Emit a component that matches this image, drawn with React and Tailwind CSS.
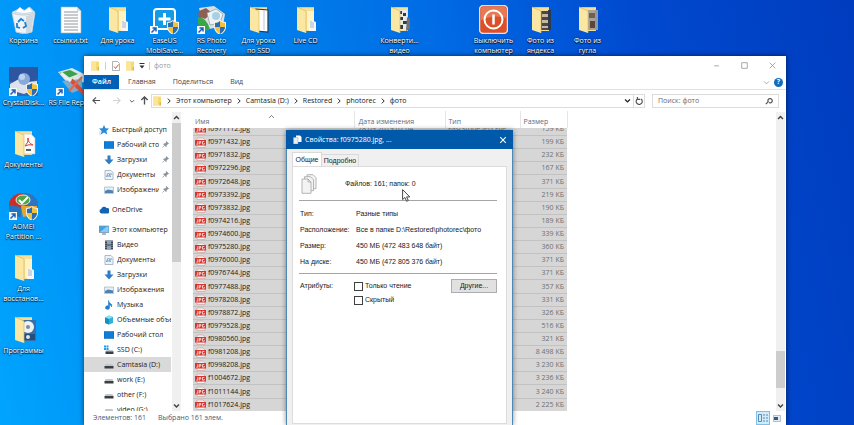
import { useState } from "react";

const DESKTOP = [
  { col: 1, row: 1, icon: "bin", label: ["Корзина"] },
  { col: 2, row: 1, icon: "text", label: ["ссылки.txt"] },
  { col: 3, row: 1, icon: "folder", label: ["Для урока"] },
  { col: 4, row: 1, icon: "easeus", label: ["EaseUS", "MobiSave..."] },
  { col: 5, row: 1, icon: "rsphoto", label: ["RS Photo", "Recovery"] },
  { col: 6, row: 1, icon: "folderBook", label: ["Для урока", "по SSD"] },
  { col: 7, row: 1, icon: "folder", label: ["Live CD"] },
  { col: 9, row: 1, icon: "folderVideo", label: ["Конверти...", "видео"] },
  { col: 11, row: 1, icon: "power", label: ["Выключить", "компьютер"] },
  { col: 12, row: 1, icon: "folderDark", label: ["Фото из", "яндекса"] },
  { col: 13, row: 1, icon: "folderPhoto", label: ["Фото из", "гугла"] },
  { col: 1, row: 2, icon: "crystal", label: ["CrystalDisk..."] },
  { col: 2, row: 2, icon: "rsfile", label: ["RS File Repair"] },
  { col: 1, row: 3, icon: "folderPdf", label: ["Документы"] },
  { col: 1, row: 4, icon: "aomei", label: ["AOMEI", "Partition ..."] },
  { col: 1, row: 5, icon: "folder", label: ["Для", "восстанов..."] },
  { col: 1, row: 6, icon: "folderDisc", label: ["Программы"] },
];

const QUICK = [
  { icon: "desktop", label: "Рабочий стол" },
  { icon: "download", label: "Загрузки" },
  { icon: "document", label: "Документы" },
  { icon: "image", label: "Изображения" },
];

const PC = [
  { icon: "video", label: "Видео" },
  { icon: "document", label: "Документы" },
  { icon: "download", label: "Загрузки" },
  { icon: "image", label: "Изображения" },
  { icon: "music", label: "Музыка" },
  { icon: "cube", label: "Объемные объекты" },
  { icon: "desktop", label: "Рабочий стол" },
  { icon: "ssd", label: "SSD (C:)" },
  { icon: "drive", label: "Camtasia (D:)", active: true },
  { icon: "drive", label: "work (E:)" },
  { icon: "drive", label: "other (F:)" },
  { icon: "drive", label: "video (G:)" },
];

const FILES = [
  ["f0971112.jpg", "159 КБ", "28.09.2019 02:04", "FastStone JPG File"],
  ["f0971432.jpg", "199 КБ"],
  ["f0971832.jpg", "232 КБ"],
  ["f0972296.jpg", "167 КБ"],
  ["f0972648.jpg", "371 КБ"],
  ["f0973392.jpg", "219 КБ"],
  ["f0973832.jpg", "190 КБ"],
  ["f0974216.jpg", "189 КБ"],
  ["f0974600.jpg", "339 КБ"],
  ["f0975280.jpg", "360 КБ"],
  ["f0976000.jpg", "371 КБ"],
  ["f0976744.jpg", "371 КБ"],
  ["f0977488.jpg", "357 КБ"],
  ["f0978208.jpg", "331 КБ"],
  ["f0978872.jpg", "326 КБ"],
  ["f0979528.jpg", "516 КБ"],
  ["f0980560.jpg", "321 КБ"],
  ["f0981208.jpg", "8 498 КБ"],
  ["f0998208.jpg", "3 230 КБ"],
  ["f1004672.jpg", "3 236 КБ"],
  ["f1011144.jpg", "3 240 КБ"],
  ["f1017624.jpg", "2 225 КБ"],
];

const PATH = ["Этот компьютер", "Camtasia (D:)", "Restored", "photorec", "фото"];

const Shield = () => (
  <g>
    <path d="M17 17q4 0 6-2q2 2 6 2v5q0 5-6 8q-6-3-6-8z" fill="#f4f1e4" />
    <path d="M18 18q3 0 5-2v6h-5z" fill="#2b6cb8" />
    <path d="M23 16q2 2 5 2v4h-5z" fill="#f3c13a" />
    <path d="M18 22h5v7q-5-3-5-7z" fill="#f3c13a" />
    <path d="M23 22h5q0 4-5 7z" fill="#2b6cb8" />
  </g>
);

const Shortcut = () => (
  <g>
    <path d="M0 21h8v8h-8z" fill="#f5f9fd" />
    <path d="M1.500 27.500l4-4M2.500 23h3.500v3.500" fill="none" stroke="#1f5fb4" strokeWidth="1.500" />
  </g>
);

const FolderBase = ({ children }) => (
  <g>
    <path d="M6 3l3-1h14v24h-14z" fill="#e9c86c" />
    <path d="M9 3h14v23H9z" fill="#f6df95" />
    {children}
    <path d="M6 2l9 4v22l-9-3z" fill="#fbe7a4" />
    <path d="M6 2l9 4v22" fill="none" stroke="#dcba5c" strokeWidth="0.700" />
  </g>
);

const desktopIcons = {
  bin: (
    <g>
      <path d="M3 7l8-4l5 2l5-3l5 5l-3 20q-8 3-16 0z" fill="#dfe7ee" />
      <path d="M3 8q11 4 23 0l-3 19q-8 3-16 0z" fill="#eef3f7" stroke="#b4c3cf" strokeWidth="0.700" />
      <path d="M6 7l5-5l4 4l5-4l4 5q-9 3-18 0z" fill="#fff" stroke="#bac5cf" strokeWidth="0.600" />
      <path d="M17 11l8-2l-3 18l-5 1z" fill="#cdd8e1" />
      <path d="M9 17l3-3l3 2m1 1l1 4l-3 2m-3 0l-3-1v-4" fill="none" stroke="#1f7fd0" strokeWidth="1.800" />
    </g>
  ),
  text: (
    <g>
      <path d="M5 2h16l4 4v22H5z" fill="#fdfdfd" stroke="#aab4bd" strokeWidth="0.600" />
      <path d="M21 2v4h4" fill="#d5dbe0" />
      <path d="M8 7h14M8 10h14M8 13h14M8 16h14M8 19h14M8 22h14M8 25h14" stroke="#8f989f" strokeWidth="1" />
    </g>
  ),
  folder: (
    <FolderBase>
      <path d="M16 6h7v19h-7z" fill="#fff3c4" />
      <path d="M20 15l5 2v9h-7v-9z" fill="#f4f6f8" />
      <path d="M20 16v7M22 17v6" stroke="#8fa5ba" strokeWidth="0.800" />
    </FolderBase>
  ),
  folderBook: (
    <FolderBase>
      <path d="M12 4l12 1v22l-11-1z" fill="#fdfdfd" stroke="#27384d" strokeWidth="1.200" />
      <path d="M20 5v20" stroke="#bfc9d3" strokeWidth="1" />
    </FolderBase>
  ),
  folderVideo: (
    <FolderBase>
      <path d="M13 5h9v20h-9z" fill="#e7eaec" />
      <path d="M14 6h3v3h-3zM18 8h3v3h-3zM14 12h4v3h-4zM18 16h4v3h-4zM14 20h4v4h-4z" fill="#333b42" />
      <path d="M22 12l3 2v10l-4 2z" fill="#6d7478" />
    </FolderBase>
  ),
  folderDark: (
    <FolderBase>
      <path d="M14 6h11v19H14z" fill="#4b4746" />
      <path d="M16 9h6v3h-6zM16 15h6v3h-6zM16 21h6v2h-6z" fill="#c7b6a2" />
      <path d="M22 5h3v20h-3z" fill="#2e3a4b" />
    </FolderBase>
  ),
  folderPhoto: (
    <FolderBase>
      <path d="M15 5h10v20H15z" fill="#a7a39c" />
      <path d="M16 8h6v5h-6z" fill="#735f4e" />
      <path d="M17 16h5v7h-5z" fill="#5c4636" />
      <path d="M22 5h3v20h-3z" fill="#8d99a8" />
    </FolderBase>
  ),
  folderPdf: (
    <FolderBase>
      <path d="M13 5h9l4 4v16H13z" fill="#fbfbfb" stroke="#c2c2c2" strokeWidth="0.600" />
      <path d="M16 17q4-4 3-8q0 5 5 7q-4-1-8 1z" fill="none" stroke="#d4443a" strokeWidth="1" />
      <path d="M17 20h5v2h-5z" fill="#59616a" />
    </FolderBase>
  ),
  folderDisc: (
    <FolderBase>
      <path d="M13 5h14v21H13z" fill="#3a6fa8" />
      <path d="M14 19h12v6H14z" fill="#274f7e" />
      <circle cx="19" cy="12" r="6" fill="#eef2f5" />
      <circle cx="19" cy="12" r="2" fill="#7a8b9a" />
      <circle cx="19" cy="22" r="2" fill="#dfe7ee" />
    </FolderBase>
  ),
  easeus: (
    <g>
      <rect x="4" y="4" width="21" height="20" rx="3" fill="#139ae6" stroke="#fff" strokeWidth="2" />
      <path d="M14.500 8v12M8.500 14h12" stroke="#fff" strokeWidth="3" />
      <Shield />
      <Shortcut />
    </g>
  ),
  rsphoto: (
    <g>
      <path d="M2 3l15-2l11 8l-2 12l-18 4z" fill="#d9e0e2" />
      <path d="M2 6l7-3l6 5l-7 6l-7-3z" fill="#8d5f55" />
      <path d="M1 12q8 0 12 12l-8 3q-5-6-4-15z" fill="#3aa648" />
      <path d="M10 8l9-4l7 5l-3 9l-10 2z" fill="#edf3f4" stroke="#8c9aa0" strokeWidth="0.700" />
      <circle cx="19" cy="11" r="4" fill="#a8d0e5" />
      <Shield />
      <Shortcut />
    </g>
  ),
  rsfile: (
    <g>
      <path d="M2 5l14-4l12 6v8l-14 4z" fill="#dde6e2" />
      <path d="M3 6l11-3l8 4l-10 4z" fill="#3ba14d" />
      <path d="M6 14l20-2v10l-10 4z" fill="#7fa9c6" />
      <path d="M15 13l14 14" stroke="#df4b34" strokeWidth="4" />
      <path d="M26 10l-13 14" stroke="#e06a4e" strokeWidth="2" />
      <path d="M5 6l10 8" stroke="#e9eef0" strokeWidth="3" />
      <Shortcut />
    </g>
  ),
  power: (
    <g>
      <rect x="0.500" y="0.500" width="28" height="28" rx="4" fill="#d9502b" stroke="#f8d9cc" strokeWidth="1.500" />
      <path d="M2 4q0-2 2-2h21q2 0 2 2v9q-12-4-25 2z" fill="#e67a55" />
      <circle cx="14.500" cy="14.500" r="9" fill="none" stroke="#fff" strokeWidth="2" />
      <path d="M14.500 9.500v10" stroke="#fff" strokeWidth="2.500" />
    </g>
  ),
  crystal: (
    <g>
      <path d="M0 0h29v29H0z" fill="#3668b1" />
      <path d="M0 0h29v12q-14 7-29 2z" fill="#2d55a0" />
      <path d="M1 17l9-5l9 3l9-1v7l-13 6l-14-4z" fill="#dce3ec" />
      <circle cx="15" cy="12" r="6" fill="#87a9dc" />
      <circle cx="13" cy="10" r="3" fill="#bcd2f1" />
      <Shield />
      <Shortcut />
    </g>
  ),
  aomei: (
    <g>
      <path d="M0 12q3-10 14-10q12 0 15 10v5H0z" fill="#c92e28" />
      <path d="M14 2q12 0 15 10v5l-10-2z" fill="#2f74c0" />
      <path d="M0 14l12 2v10q-11-1-12-8z" fill="#2375bd" />
      <path d="M12 15h16q0 9-14 11z" fill="#e6a62c" />
      <ellipse cx="14" cy="9" rx="7" ry="5" fill="#4ca647" stroke="#e7efe2" />
      <path d="M10 9l3 3l6-6" fill="none" stroke="#fff" strokeWidth="2" />
      <Shield />
      <Shortcut />
    </g>
  ),
};

const smallIcons = {
  star: (
    <g>
      <path d="M5 0l1.500 3.200l3.500.3l-2.600 2.400l.8 3.600l-3.200-1.900l-3.200 1.900l.8-3.600l-2.600-2.400l3.500-.3z" fill="#2b8ad6" />
      <path d="M0 7h3M0 9h2" stroke="#9cc6ea" strokeWidth="0.800" />
    </g>
  ),
  desktop: <path d="M0 1.500h10v7H0z" fill="#0f7cd8" stroke="#0a5ea8" strokeWidth="0.500" />,
  download: <path d="M3.500 0.500h3v4h3l-4.500 5l-4.500-5h3z" fill="#2d7cc8" />,
  document: (
    <g>
      <path d="M1 0.500h6l2 2v7H1z" fill="#eef3f7" stroke="#8ba2b6" strokeWidth="0.700" />
      <path d="M2.500 7q1-4 2-4t2 4M3 6h3M6 4h2" fill="none" stroke="#5a86b0" strokeWidth="0.800" />
    </g>
  ),
  image: (
    <g>
      <path d="M0.500 2h9v6.500h-9z" fill="#e6eef4" stroke="#90a7ba" strokeWidth="0.600" />
      <path d="M1 6l3-1.500l5 1v2.500h-8z" fill="#4d83b5" />
    </g>
  ),
  cloud: <path d="M2.500 8.500a2.300 2.300 0 0 1-.3-4.500a3 3 0 0 1 5.300-1a2.700 2.700 0 0 1 1 5.500z" fill="#1464b4" />,
  pc: (
    <g>
      <path d="M0 1h10v6.500H0z" fill="#3fa3e6" stroke="#7d93a5" strokeWidth="0.700" />
      <path d="M1 7L8 1.500h1.500v5.500z" fill="#8acbf4" />
      <path d="M3 9h4" stroke="#5f7382" />
    </g>
  ),
  video: (
    <g>
      <path d="M1 0.500h8v9H1z" fill="#3c4753" />
      <path d="M3 1h4v3.500H3zM3 5.500h4V9H3z" fill="#8ca4b9" />
      <path d="M2 1v8M8 1v8" stroke="#dce3e8" strokeWidth="0.700" strokeDasharray="1 1" />
    </g>
  ),
  music: <path d="M4.500 0.500q0 2 2 3t1 3.500q0-2-2-2.500v3a2 1.800 0 1 1-1-1.500z" fill="#1c7fd2" stroke="#1c7fd2" strokeWidth="0.600" />,
  cube: (
    <g>
      <path d="M1 2.500L5 .5l4 1.500v6L5 9.500L1 8z" fill="#30b2d8" />
      <path d="M1 2.500l4 1.500l4-2L5 .5z" fill="#8be0f2" />
      <path d="M5 4v5.500L1 8V2.500z" fill="#1591bd" />
    </g>
  ),
  drive: (
    <g>
      <path d="M1.500 4h7l1 2.500h-9z" fill="#c3c7ca" />
      <path d="M0.500 6h9v2.500h-9z" fill="#3a3f43" />
    </g>
  ),
  ssd: (
    <g>
      <path d="M0 0.500h2v2H0zM2.500.5h2v2h-2zM0 3h2v2H0zM2.500 3h2v2h-2z" fill="#1aa0e8" />
      <path d="M2.500 5h6l1 2h-8z" fill="#c3c7ca" />
      <path d="M1.500 6.500h8V9h-8z" fill="#3a3f43" />
    </g>
  ),
  folder: (
    <g>
      <path d="M1 0.500h8v9H1z" fill="#f6d975" />
      <path d="M1 0.500h5v9H1z" fill="#fbe698" />
      <path d="M7.500 6h1.500v3.500H7.500z" fill="#e2bb4c" />
    </g>
  ),
  checkDoc: (
    <g>
      <path d="M1.500 0.500h5l2 2v7h-7z" fill="#fff" stroke="#8f8f8f" strokeWidth="0.700" />
      <path d="M3 5.500l1.500 2l3-4" fill="none" stroke="#c65a4a" strokeWidth="1" />
    </g>
  ),
};

const Small = ({ name, className = "h-[10px] w-[10px]" }) => (
  <svg viewBox="0 0 10 10" className={`${className} shrink-0`} aria-hidden="true">
    {smallIcons[name]}
  </svg>
);

const Line = ({ d, className = "h-2 w-2", width = 1.2 }) => (
  <svg viewBox="0 0 10 10" className={`${className} shrink-0`} fill="none" stroke="currentColor" strokeWidth={width} aria-hidden="true">
    <path d={d} />
  </svg>
);

const UP = "M1.500 7L5 3.500L8.500 7";
const DOWN = "M1.500 3.500L5 7L8.500 3.500";
const RIGHT = "M3.500 2L6.500 5L3.500 8";

const JpgIcon = () => (
  <svg viewBox="0 0 11 11" className="h-[11px] w-[11px] shrink-0" aria-hidden="true">
    <path d="M2 1h6l2 2v7.500H2z" fill="#f5eeee" stroke="#c99b98" strokeWidth="0.600" />
    <path d="M0 3h11v5.500H0z" fill="#d8352d" />
    <path d="M2.800 4.200v3H1.300M4.300 7.500V4.500h1.500v1.500H4.300M9.300 4.500H7.500v2.700h1.800V6" fill="none" stroke="#fff" strokeWidth="0.700" />
  </svg>
);

const DesktopIcon = ({ item }) => (
  <a
    href="#"
    className="flex flex-col items-center font-medium text-white [text-shadow:0_1px_1px_#000,0_0_2px_#00183a]"
    style={{ gridColumn: item.col, gridRow: item.row }}
  >
    <svg viewBox="0 0 29 29" className="mb-0.5 h-[29px] w-[29px] shrink-0" aria-hidden="true">
      {desktopIcons[item.icon]}
    </svg>
    {item.label.map((line) => (
      <span key={line} className="whitespace-nowrap">
        {line}
      </span>
    ))}
  </a>
);

const ScrollBar = ({ children }) => (
  <div className="flex w-[9px] shrink-0 flex-col items-center bg-[#f0f0f0] text-[#404040]">
    <button aria-label="Вверх" className="flex h-[11px] w-full items-center justify-center">
      <Line d={UP} className="h-[7px] w-[7px]" width={2} />
    </button>
    <div className="flex w-full flex-1 flex-col">{children}</div>
    <button aria-label="Вниз" className="flex h-[11px] w-full items-center justify-center">
      <Line d={DOWN} className="h-[7px] w-[7px]" width={2} />
    </button>
  </div>
);

const NavItem = ({ icon, label, active, pinned, root }) => (
  <a
    href="#"
    className={`flex h-[15px] shrink-0 items-center gap-[3px] overflow-hidden whitespace-nowrap ${root ? "pl-[15px]" : "pl-5"} ${
      active ? "bg-[#d9d9d9]" : ""
    }`}
  >
    <Small name={icon} />
    <span className="min-w-0 flex-1 overflow-hidden">{label}</span>
    {pinned && (
      <svg viewBox="0 0 8 8" className="mr-0.5 h-[7px] w-[7px] shrink-0" aria-hidden="true">
        <path d="M5 0.500l2.500 2.500l-1 .3l-1.500 1.500l-.3 1.700l-3-3l1.700-.3l1.500-1.500zM3 5L.5 7.500" fill="#8a9399" stroke="#8a9399" strokeWidth="0.800" />
      </svg>
    )}
  </a>
);

const Explorer = () => {
  const [query, setQuery] = useState("");

  return (
    <section className="absolute top-14 right-[68px] bottom-0 left-[84px] flex flex-col bg-white text-[#202020] shadow-[0_0_5px_rgba(0,0,0,0.6)]">
      <header className="flex h-[19px] shrink-0 items-center pl-1.5 text-[#9a9a9a]">
        <Small name="folder" />
        <span className="mx-[5px] h-2 w-px bg-[#cfcfcf]" />
        <Small name="checkDoc" />
        <Small name="folder" className="ml-1 h-[10px] w-[10px]" />
        <svg viewBox="0 0 6 6" className="ml-1 h-[6px] w-[6px] text-[#303030]" aria-hidden="true">
          <path d="M0.500 0h5v1h-5zM0.500 2.500h5l-2.500 3z" fill="currentColor" />
        </svg>
        <span className="mx-1 h-2 w-px bg-[#cfcfcf]" />
        <h1 className="flex-1">фото</h1>
        <button aria-label="Свернуть" className="flex w-7 justify-center">
          <Line d="M1.500 5.500h7" className="h-[7px] w-[7px]" />
        </button>
        <button aria-label="Развернуть" className="flex w-7 justify-center">
          <Line d="M1 1h8v8H1z" className="h-[7px] w-[7px]" />
        </button>
        <button aria-label="Закрыть" className="flex w-7 justify-center">
          <Line d="M1 1l8 8M9 1l-8 8" className="h-[7px] w-[7px]" />
        </button>
      </header>

      <nav className="flex h-[15px] shrink-0 items-stretch border-b border-[#e2e2e2] text-[#454545]">
        <button className="w-[35px] bg-[#0060b6] font-semibold text-white">Файл</button>
        <button className="ml-[9px]">Главная</button>
        <button className="ml-[17px]">Поделиться</button>
        <button className="ml-[17px]">Вид</button>
        <button aria-label="Развернуть ленту" className="ml-auto flex w-4 items-center justify-center text-[#9a9a9a]">
          <Line d={DOWN} className="h-[7px] w-[7px]" />
        </button>
        <button aria-label="Справка" className="mr-[3px] flex items-center">
          <span className="flex h-[9px] w-[9px] items-center justify-center rounded-full bg-[#0f6cbf] font-bold text-white">?</span>
        </button>
      </nav>

      <div className="flex h-[21px] shrink-0 items-center pr-[7px] pl-2 text-[#505050]">
        <button aria-label="Назад" className="flex w-5">
          <Line d="M9 5H1M4.500 1.500L1 5l3.500 3.500" className="h-[9px] w-[9px]" />
        </button>
        <button aria-label="Вперёд" className="flex w-[17px] text-[#d4d4d4]">
          <Line d="M1 5h8M5.500 1.500L9 5l-3.500 3.500" className="h-[9px] w-[9px]" />
        </button>
        <button aria-label="Последние расположения" className="flex w-2">
          <Line d={DOWN} className="h-[6px] w-[6px]" width={1.5} />
        </button>
        <button aria-label="Вверх на один уровень" className="flex w-[14px] justify-center">
          <Line d="M5 9.500V1M1.500 4.500L5 1l3.500 3.500" className="h-[9px] w-[9px]" width={1.5} />
        </button>
        <div className="flex h-[14px] min-w-0 flex-1 items-center border border-[#dcdcdc] text-[#202020]">
          <Small name="folder" />
          {PATH.map((part) => (
            <span key={part} className="flex items-center whitespace-nowrap">
              <Line d={RIGHT} className="mx-[3px] h-2 w-2" width={1.2} />
              <a href="#">{part}</a>
            </span>
          ))}
          <button aria-label="Журнал адресов" className="ml-auto flex w-3 justify-center">
            <Line d={DOWN} className="h-[7px] w-[7px]" width={1.8} />
          </button>
          <button aria-label="Обновить" className="flex h-full w-[11px] items-center justify-center border-l border-[#dcdcdc] text-[#505050]">
            <Line d="M7.500 2.500a3.800 3.800 0 1 1-4.500 0M3 0v3h3.500" className="h-[8px] w-[8px]" width={1.4} />
          </button>
        </div>
        <label className="ml-[7px] flex h-[14px] w-[127px] items-center border border-[#dcdcdc] px-[5px]">
          <input
            type="search"
            aria-label="Поиск: фото"
            placeholder="Поиск: фото"
            value={query}
            onChange={(e) => setQuery(e.target.value)}
            className="min-w-0 flex-1 outline-none placeholder:text-[#6a6a6a]"
          />
          <Line d="M4 6a2.700 2.700 0 1 1 1 1M4.500 5.500L1 9" className="h-[8px] w-[8px]" width={1.5} />
        </label>
      </div>

      <main className="flex min-h-0 flex-1">
        <aside className="flex w-[87px] shrink-0 flex-col overflow-hidden pt-[11px]">
          <NavItem icon="star" label="Быстрый доступ" root />
          {QUICK.map((item) => (
            <NavItem key={item.label} {...item} pinned />
          ))}
          <div className="mt-[5px]">
            <NavItem icon="cloud" label="OneDrive" root />
          </div>
          <div className="mt-[5px]">
            <NavItem icon="pc" label="Этот компьютер" root />
          </div>
          {PC.map((item) => (
            <NavItem key={item.label} {...item} />
          ))}
        </aside>
        <div className="ml-px flex pt-px">
          <ScrollBar>
            <div className="h-[139px] bg-[#cdcdcd]" />
          </ScrollBar>
        </div>

        <div className="ml-3 min-w-0 flex-1 overflow-hidden">
          <table className="w-[374px] table-fixed border-collapse">
            <colgroup>
              <col className="w-[161px]" />
              <col className="w-[91px]" />
              <col className="w-[75px]" />
              <col className="w-[47px]" />
            </colgroup>
            <thead>
              <tr className="h-[17px] text-left text-[#5b6b80]">
                <th className="border-r border-[#e6e6e6] p-0 pl-0.5 font-normal">
                  <span className="flex">
                    <span className="w-[73px] pt-1">Имя</span>
                    <Line d={UP} className="h-[7px] w-[7px]" />
                  </span>
                </th>
                <th className="border-r border-[#e6e6e6] p-0 pt-1 pl-1 font-normal">Дата изменения</th>
                <th className="border-r border-[#e6e6e6] p-0 pt-1 pl-[3px] font-normal">Тип</th>
                <th className="border-r border-[#e6e6e6] p-0 pt-1 pl-[3px] font-normal">Размер</th>
              </tr>
            </thead>
          </table>
          {/* the list is scrolled to its end, so the first row is cut by the header */}
          <div className="flex h-[284px] flex-col justify-end overflow-hidden">
            <table className="h-[289px] w-[374px] shrink-0 table-fixed border-collapse bg-[#d6d6d6]">
              <colgroup>
                <col className="w-[161px]" />
                <col className="w-[91px]" />
                <col className="w-[75px]" />
                <col className="w-[47px]" />
              </colgroup>
              <tbody>
                {FILES.map(([name, size, date, type]) => (
                  <tr key={name} className="border-b border-[#c2c2c2] whitespace-nowrap text-[#707070]">
                    <td className="p-0 pl-0.5 text-[#202020]">
                      <span className="flex items-center gap-0.5">
                        <JpgIcon />
                        {name}
                      </span>
                    </td>
                    <td className="p-0 pl-1">{date}</td>
                    <td className="p-0 pl-[3px]">{type}</td>
                    <td className="p-0 pr-[3px] text-right">{size}</td>
                  </tr>
                ))}
              </tbody>
            </table>
          </div>
        </div>

        <div className="mr-px flex pt-px">
          <ScrollBar>
            <div className="flex-1" />
            <div className="mb-3 h-[37px] bg-[#cdcdcd]" />
          </ScrollBar>
        </div>
      </main>

      <footer className="flex h-[14px] shrink-0 items-center gap-3 pl-[9px] text-[#47597a]">
        <span>Элементов: 161</span>
        <span>Выбрано 161 элем.</span>
        <button aria-label="Таблица" className="ml-auto flex h-full w-[14px] items-center justify-center border border-[#7fc0e8] bg-[#d3ecfb]">
          <svg viewBox="0 0 10 8" className="h-[8px] w-[10px]" fill="none" stroke="#4c7ea8" strokeWidth="0.900" aria-hidden="true">
            <path d="M0.500 .5h3v7h-3zM5 1h2M8 1h2M5 4h2M8 4h2M5 7h2M8 7h2" />
          </svg>
        </button>
        <button aria-label="Крупные значки" className="mr-[5px] -ml-[9px] flex h-[7px] w-[8px] items-center border border-[#b4c2d0] bg-[#e3ebf2]">
          <span className="h-[3px] w-1 bg-[#34598a]" />
        </button>
      </footer>
    </section>
  );
};

const Row = ({ label, children }) => (
  <div className="flex h-4 items-center">
    <dt className="w-14">{label}</dt>
    <dd className="whitespace-nowrap">{children}</dd>
  </div>
);

const Check = ({ label }) => {
  const [on, setOn] = useState(false);
  return (
    <label className="flex h-[14px] items-center gap-0.5">
      <input
        type="checkbox"
        checked={on}
        onChange={() => setOn(!on)}
        className="h-[9px] w-[9px] appearance-none border border-[#404040] bg-white checked:bg-[#0060b6]"
      />
      {label}
    </label>
  );
};

const Properties = () => (
  <section
    role="dialog"
    aria-label="Свойства"
    className="absolute top-[130px] bottom-0 left-[286px] flex w-[227px] flex-col border-x border-[#4f87b5] bg-[#f0f0f0] text-[#202020] shadow-[0_0_5px_rgba(0,0,0,0.45)]"
  >
    <header className="-mx-px flex h-[19px] shrink-0 items-center bg-[#005aa9] pr-[6px] pl-[7px] text-white">
      <svg viewBox="0 0 9 9" className="mr-[3px] h-[9px] w-[9px]" aria-hidden="true">
        <path d="M3 .5h4l1.500 1.500v5H3z" fill="#fff" />
        <path d="M.5 2.500H5V9H.5z" fill="#e9edf0" stroke="#8da5bd" strokeWidth="0.500" />
      </svg>
      <h2 className="flex-1">Свойства: f0975280.jpg, ...</h2>
      <button aria-label="Закрыть окно">
        <Line d="M1.500 1.500l7 7M8.500 1.500l-7 7" className="h-[8px] w-[8px]" width={1.3} />
      </button>
    </header>

    <div className="flex flex-1 flex-col font-['Liberation_Sans',sans-serif]">
      <div className="mt-[3px] flex items-end pl-[5px]" role="tablist">
        <button role="tab" aria-selected="true" className="-mb-px flex h-[15px] w-[30px] items-center justify-center border border-b-0 border-[#d9d9d9] bg-white">
          Общие
        </button>
        <button role="tab" aria-selected="false" className="flex h-3 w-[37px] items-center justify-center border border-b-0 border-l-0 border-[#d9d9d9]">
          Подробно
        </button>
      </div>

      <div className="mx-[5px] mb-px flex-1 border border-[#dcdcdc] bg-white pr-[9px] pl-1.5">
        <div className="flex h-[34px] items-center border-b border-[#a5a5a5]">
          <svg viewBox="0 0 16 20" className="ml-0.5 h-5 w-4" fill="#f3f3f3" stroke="#a3a3a3" strokeWidth="0.800" aria-hidden="true">
            <path d="M6 .7h6l3 3v11H6z" />
            <path d="M3.500 2.700h6l3 3v11h-9z" />
            <path d="M1 5h6l3 3v11.300H1z" />
            <path d="M7 5v3h3" fill="none" />
          </svg>
          <p className="ml-7">Файлов: 161; папок: 0</p>
        </div>
        <dl className="border-b border-[#a5a5a5] pt-[5px] pb-[3px] pl-px">
          <Row label="Тип:">Разные типы</Row>
          <Row label="Расположение:">Все в папке D:\Restored\photorec\фото</Row>
          <Row label="Размер:">450 МБ (472 483 648 байт)</Row>
          <Row label="На диске:">450 МБ (472 805 376 байт)</Row>
        </dl>
        <div className="flex items-start pt-[5px] pl-px">
          <span className="flex h-[14px] w-[54px] items-center">Атрибуты:</span>
          <div>
            <Check label="Только чтение" />
            <Check label="Скрытый" />
          </div>
          <button className="ml-auto flex h-[14px] w-[46px] items-center justify-center border border-[#adadad] bg-[#e1e1e1]">Другие...</button>
        </div>
      </div>
    </div>
  </section>
);

export default function App() {
  return (
    <div className="relative h-screen overflow-hidden bg-[linear-gradient(78deg,#00a4ff_0%,#0094f6_14%,#0086ee_32%,#006ae4_56%,#004ad0_76%,#003cbe_100%)] font-['Open_Sans','Noto_Sans',sans-serif] text-[7px] leading-[10px]">
      <div className="grid grid-cols-[repeat(18,47px)] grid-rows-[repeat(6,62px)] pt-[5px]">
        {DESKTOP.map((item) => (
          <DesktopIcon key={item.label.join(" ")} item={item} />
        ))}
      </div>
      <Explorer />
      <Properties />
      <svg viewBox="0 0 9 13" className="pointer-events-none absolute top-[189px] left-[402px] h-[13px] w-[9px]" aria-hidden="true">
        <path d="M.6.6v10l2.300-2.100l1.700 3.800l1.700-.8l-1.700-3.600h3.200z" fill="#fff" stroke="#333" strokeWidth="0.900" />
      </svg>
    </div>
  );
}
